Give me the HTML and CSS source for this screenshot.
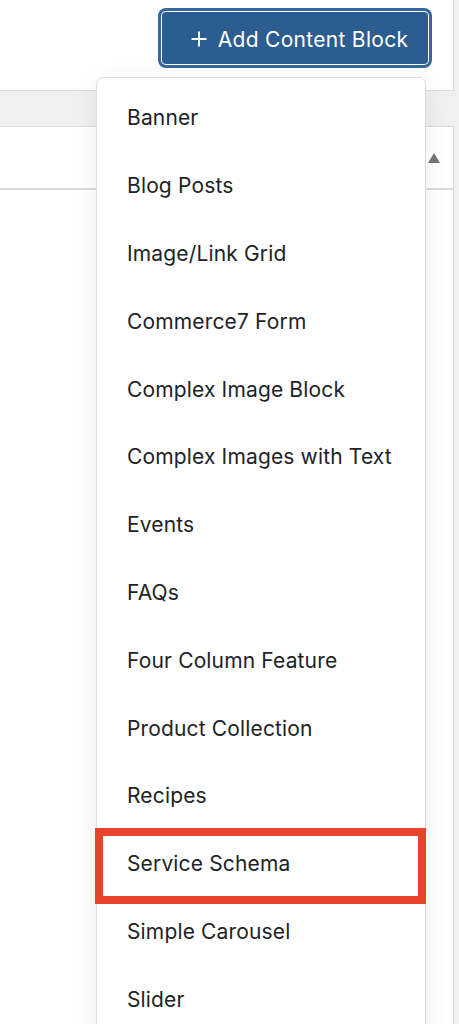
FILE: index.html
```html
<!DOCTYPE html>
<html lang="en">
<head>
<meta charset="utf-8">
<title>Add Content Block</title>
<link rel="stylesheet" href="styles.css">
</head>
<body>
<div class="page">
  <div class="top-card">
    <button class="add-btn" type="button">
      <svg class="plus" viewBox="0 0 16 16" width="16" height="16" aria-hidden="true"><path d="M8 0.5v15M0.5 8h15" stroke="#fff" stroke-width="2" fill="none"/></svg>
      <span>Add Content Block</span>
    </button>
  </div>
  <div class="band"></div>
  <div class="panel">
    <div class="panel-head">
      <span class="caret"></span>
    </div>
    <div class="panel-body"></div>
  </div>

  <ul class="menu">
    <li class="item">Banner</li>
    <li class="item">Blog Posts</li>
    <li class="item">Image/Link Grid</li>
    <li class="item">Commerce7 Form</li>
    <li class="item">Complex Image Block</li>
    <li class="item">Complex Images with Text</li>
    <li class="item">Events</li>
    <li class="item">FAQs</li>
    <li class="item">Four Column Feature</li>
    <li class="item">Product Collection</li>
    <li class="item">Recipes</li>
    <li class="item highlight">Service Schema</li>
    <li class="item">Simple Carousel</li>
    <li class="item">Slider</li>
  </ul>
</div>
</body>
</html>
```

FILE: styles.css
```css
html, body {
  margin: 0;
  padding: 0;
  background: #f0f0f1;
  font-family: Inter, "Noto Sans", "Liberation Sans", sans-serif;
  overflow: hidden;
}

.page {
  position: relative;
  width: 459px;
  height: 1024px;
  overflow: hidden;
}

.top-card {
  width: 454px;
  height: 91px;
  box-sizing: border-box;
  background: #fff;
  border-right: 1px solid #dcdcde;
  border-bottom: 1px solid #dcdcde;
  display: flex;
  justify-content: flex-end;
  align-items: flex-start;
  padding: 12px 25px 0 0;
}

.add-btn {
  width: 266px;
  height: 52px;
  box-sizing: border-box;
  background: #2c5d91;
  border: none;
  border-radius: 4px;
  box-shadow: 0 0 0 1px #fff, 0 0 0 4px #3467a0;
  color: #fff;
  font-family: Inter, "Noto Sans", "Liberation Sans", sans-serif;
  font-size: 21px;
  letter-spacing: 0.3px;
  display: flex;
  align-items: center;
  justify-content: center;
  gap: 11px;
  padding: 2px 0 0 9px;
}

.plus {
  display: block;
  flex: none;
}

.band {
  height: 35px;
  width: 454px;
}

.panel {
  width: 454px;
  box-sizing: border-box;
  background: #fff;
  border-top: 1px solid #dcdcde;
  border-right: 1px solid #dcdcde;
  height: 900px;
}

.panel-head {
  height: 61px;
  border-bottom: 2px solid #dcdcde;
  display: flex;
  justify-content: flex-end;
  align-items: center;
  padding-right: 13px;
}

.caret {
  width: 0;
  height: 0;
  border-left: 6.5px solid transparent;
  border-right: 6.5px solid transparent;
  border-bottom: 10px solid #73777c;
  margin-top: 1px;
}

.menu {
  position: absolute;
  left: 96px;
  top: 77px;
  width: 330px;
  box-sizing: border-box;
  margin: 0;
  padding: 6px 0 60px 0;
  list-style: none;
  background: #fff;
  border: 1px solid #dcdcde;
  border-radius: 7px;
  box-shadow: 0 4px 24px rgba(0, 0, 0, 0.07);
}

.item {
  position: relative;
  height: 67.8px;
  display: flex;
  align-items: center;
  padding-left: 30px;
  font-size: 21px;
  letter-spacing: 0.15px;
  color: #1d2327;
  white-space: nowrap;
}

.highlight::after {
  content: "";
  position: absolute;
  left: -2px;
  right: -1px;
  top: -2px;
  bottom: -6px;
  border: 8px solid #e8432b;
  pointer-events: none;
}
```
